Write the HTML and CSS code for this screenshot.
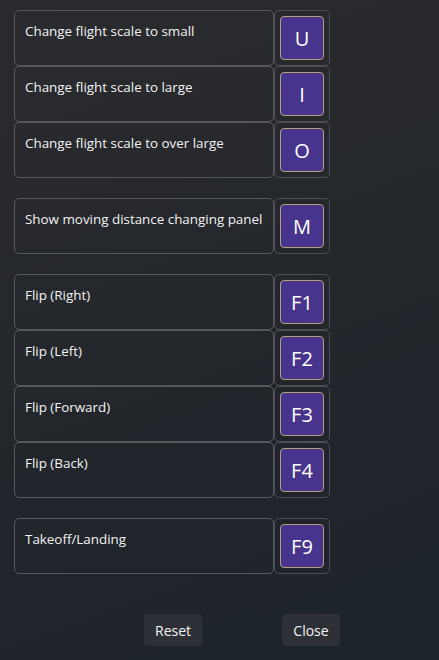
FILE: index.html
```html
<!DOCTYPE html>
<html>
<head>
<meta charset="utf-8">
<link rel="stylesheet" href="styles.css">
</head>
<body>
<div class="panel">
  <div class="group">
    <div class="row"><div class="label">Change flight scale to small</div><div class="keycell"><div class="key">U</div></div></div>
    <div class="row"><div class="label">Change flight scale to large</div><div class="keycell"><div class="key">I</div></div></div>
    <div class="row"><div class="label">Change flight scale to over large</div><div class="keycell"><div class="key">O</div></div></div>
  </div>
  <div class="group">
    <div class="row"><div class="label">Show moving distance changing panel</div><div class="keycell"><div class="key">M</div></div></div>
  </div>
  <div class="group">
    <div class="row"><div class="label">Flip (Right)</div><div class="keycell"><div class="key">F1</div></div></div>
    <div class="row"><div class="label">Flip (Left)</div><div class="keycell"><div class="key">F2</div></div></div>
    <div class="row"><div class="label">Flip (Forward)</div><div class="keycell"><div class="key">F3</div></div></div>
    <div class="row"><div class="label">Flip (Back)</div><div class="keycell"><div class="key">F4</div></div></div>
  </div>
  <div class="group">
    <div class="row"><div class="label">Takeoff/Landing</div><div class="keycell"><div class="key">F9</div></div></div>
  </div>
  <div class="buttons">
    <button class="btn">Reset</button>
    <button class="btn">Close</button>
  </div>
</div>
</body>
</html>
```
FILE: styles.css
```css
html, body {
  margin: 0;
  padding: 0;
  height: 100%;
}
body {
  background: linear-gradient(160deg, #2a2b2e 0%, #24272c 45%, #1c232a 100%);
  font-family: "Segoe UI", "Open Sans", "Noto Sans", sans-serif;
  color: #ffffff;
  overflow: hidden;
}
.panel {
  padding: 10px 0 0 14px;
  display: flex;
  flex-direction: column;
  gap: 20px;
}
.group {
  display: flex;
  flex-direction: column;
}
.row {
  display: flex;
  height: 56px;
}
.label {
  box-sizing: border-box;
  width: 260px;
  height: 56px;
  border: 1px solid #55585d;
  border-radius: 5px;
  padding: 11px 10px 0;
  font-size: 13.4px;
  line-height: 18px;
  color: #f2f2f2;
}
.keycell {
  box-sizing: border-box;
  width: 56px;
  height: 56px;
  border: 1px solid #4c4f54;
  border-radius: 5px;
  padding: 5px;
}
.key {
  box-sizing: border-box;
  width: 44px;
  height: 44px;
  background: #47348c;
  border: 1px solid #b59e7c;
  border-radius: 4px;
  display: flex;
  align-items: center;
  justify-content: center;
  font-size: 20px;
  padding-top: 1px;
  color: #ffffff;
}
.buttons {
  display: flex;
  gap: 80px;
  margin-top: 20px;
  padding-left: 130px;
}
.btn {
  width: 58px;
  height: 32px;
  background: #2d3137;
  border: none;
  border-radius: 4px;
  color: #f2f2f2;
  font-family: "Segoe UI", "Open Sans", "Noto Sans", sans-serif;
  font-size: 14px;
  padding: 0;
}
```
